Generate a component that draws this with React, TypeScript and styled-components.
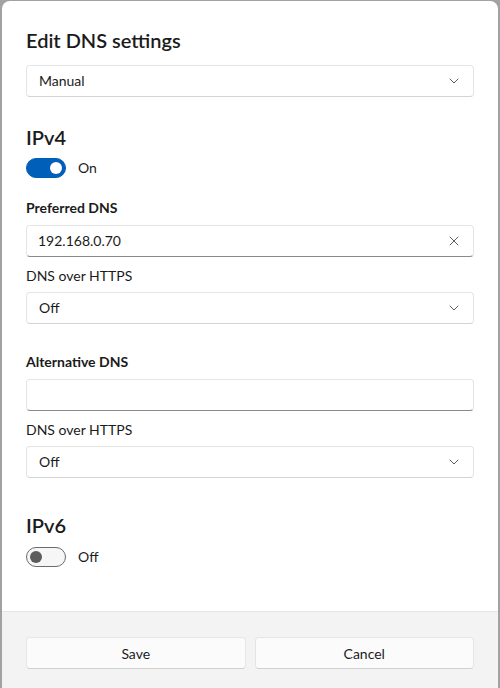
import React from "react";
import styled, { createGlobalStyle } from "styled-components";

const GlobalStyle = createGlobalStyle`
  html, body {
    margin: 0;
    padding: 0;
    background: #a2a2a2;
    height: 688px;
    overflow: hidden;
  }
  #root {
    height: 688px;
  }
`;

const Screen = styled.div`
  height: 688px;
  padding: 1px 2px 0 2px;
  box-sizing: border-box;
  display: flex;
`;

const Dialog = styled.div`
  flex: 1;
  display: flex;
  flex-direction: column;
  background: #ffffff;
  border-radius: 8px 8px 0 0;
  overflow: hidden;
  font-family: "Lato", "Open Sans", sans-serif;
  color: #1b1b1b;
`;

const Body = styled.div`
  display: flex;
  flex-direction: column;
  padding: 25px 24px 44px 24px;
`;

const Title = styled.h1`
  margin: 0;
  font-size: 20px;
  line-height: 28px;
  font-weight: 600;
`;

const SectionTitle = styled.h2<{ $mt: number }>`
  margin: ${(p) => p.$mt}px 0 0 0;
  font-size: 20px;
  line-height: 28px;
  font-weight: 600;
`;

const Label = styled.div<{ $mt: number; $strong?: boolean }>`
  margin-top: ${(p) => p.$mt}px;
  font-size: 14px;
  line-height: 20px;
  font-weight: ${(p) => (p.$strong ? 700 : 400)};
`;

const Field = styled.div<{ $mt: number; $input?: boolean }>`
  margin-top: ${(p) => p.$mt}px;
  height: 32px;
  box-sizing: border-box;
  display: flex;
  align-items: center;
  padding: 0 14px 0 ${(p) => (p.$input ? 11 : 12)}px;
  background: #ffffff;
  border: 1px solid #e5e5e5;
  border-bottom-color: ${(p) => (p.$input ? "#8a8a8a" : "#d4d4d4")};
  border-radius: 4px;
  font-size: 14px;
`;

const FieldText = styled.span`
  flex: 1;
  line-height: 20px;
`;

const ToggleRow = styled.div<{ $mt: number }>`
  margin-top: ${(p) => p.$mt}px;
  display: flex;
  align-items: center;
  gap: 12px;
  font-size: 14px;
  line-height: 20px;
`;

const Track = styled.div<{ $on: boolean }>`
  width: 40px;
  height: 20px;
  box-sizing: border-box;
  border-radius: 10px;
  display: flex;
  align-items: center;
  justify-content: ${(p) => (p.$on ? "flex-end" : "flex-start")};
  padding: 0 ${(p) => (p.$on ? 3 : 3)}px;
  background: ${(p) => (p.$on ? "#005fb8" : "#f6f6f6")};
  border: 1px solid ${(p) => (p.$on ? "#005fb8" : "#6b6b6b")};
`;

const Knob = styled.div<{ $on: boolean }>`
  width: 12px;
  height: 12px;
  border-radius: 50%;
  background: ${(p) => (p.$on ? "#ffffff" : "#5c5c5c")};
`;

const Footer = styled.div`
  margin-top: auto;
  flex: 1;
  background: #f3f3f3;
  border-top: 1px solid #e5e5e5;
  padding: 25px 24px 24px 24px;
  display: grid;
  grid-template-columns: 1fr 1fr;
  gap: 9px;
  align-content: start;
`;

const Button = styled.button`
  height: 32px;
  box-sizing: border-box;
  background: #fbfbfb;
  border: 1px solid #e5e5e5;
  border-bottom-color: #d0d0d0;
  border-radius: 4px;
  font-family: "Lato", "Open Sans", sans-serif;
  font-size: 14px;
  color: #1b1b1b;
`;

const Chevron = () => (
  <svg width="10" height="6" viewBox="0 0 10 6" fill="none">
    <path d="M1 1 L5 5 L9 1" stroke="#5d5d5d" strokeWidth="1" strokeLinecap="round" strokeLinejoin="round" />
  </svg>
);

const Close = () => (
  <svg width="10" height="10" viewBox="0 0 10 10" fill="none">
    <path d="M1 1 L9 9 M9 1 L1 9" stroke="#5d5d5d" strokeWidth="1" strokeLinecap="round" />
  </svg>
);

const Select = ({ value, mt }: { value: string; mt: number }) => (
  <Field $mt={mt}>
    <FieldText>{value}</FieldText>
    <Chevron />
  </Field>
);

const Toggle = ({ on, mt }: { on: boolean; mt: number }) => (
  <ToggleRow $mt={mt}>
    <Track $on={on}>
      <Knob $on={on} />
    </Track>
    <span>{on ? "On" : "Off"}</span>
  </ToggleRow>
);

export default function App() {
  return (
    <>
      <GlobalStyle />
      <Screen>
        <Dialog>
          <Body>
            <Title>Edit DNS settings</Title>
            <Select value="Manual" mt={11} />
            <SectionTitle $mt={26}>IPv4</SectionTitle>
            <Toggle on mt={7} />
            <Label $mt={20} $strong>Preferred DNS</Label>
            <Field $mt={7} $input>
              <FieldText>192.168.0.70</FieldText>
              <Close />
            </Field>
            <Label $mt={9}>DNS over HTTPS</Label>
            <Select value="Off" mt={6} />
            <Label $mt={28} $strong>Alternative DNS</Label>
            <Field $mt={7} $input>
              <FieldText></FieldText>
            </Field>
            <Label $mt={9}>DNS over HTTPS</Label>
            <Select value="Off" mt={6} />
            <SectionTitle $mt={33}>IPv6</SectionTitle>
            <Toggle on={false} mt={8} />
          </Body>
          <Footer>
            <Button>Save</Button>
            <Button>Cancel</Button>
          </Footer>
        </Dialog>
      </Screen>
    </>
  );
}
